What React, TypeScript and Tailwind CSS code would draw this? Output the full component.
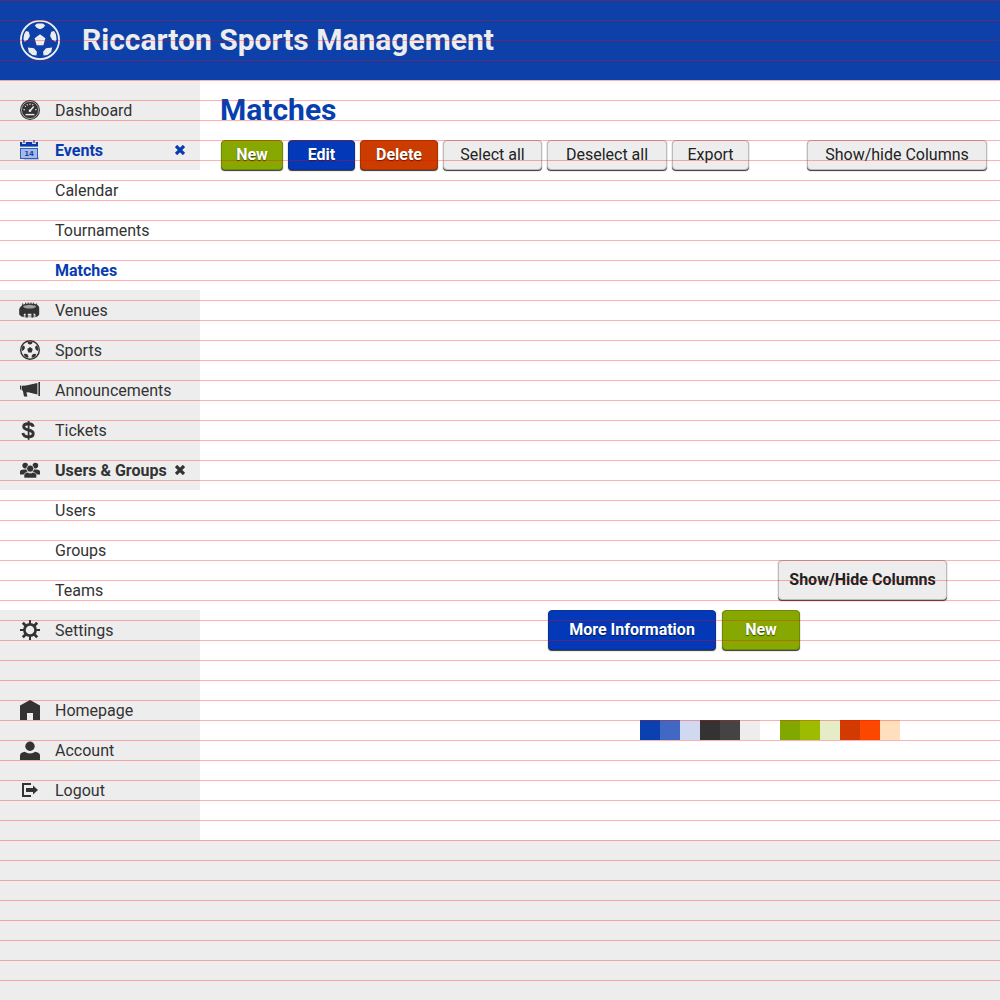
import React from "react";

type IconProps = { className?: string };

function BallIcon({ className = "", ring = 1.8 }: IconProps & { ring?: number }) {
  return (
    <svg viewBox="0 0 40 40" className={className} fill="currentColor" aria-hidden="true">
      <circle cx="20" cy="20" r={20 - ring / 2} fill="none" stroke="currentColor" strokeWidth={ring} />
      <path d="M20 14.2 25.4 18.2 23.4 25.2H16.6L14.6 18.2Z" />
      <path d="M14.8 5.2 17.3 3.6H22.7L25.2 5.2 23.4 7.8 20 9.2 16.6 7.8Z" />
      <path d="M6 11 8.8 11.8 9.9 16 8 19.4 4.6 21.8 3.4 19 4.2 14Z" />
      <path d="M34 11 31.2 11.8 30.1 16 32 19.4 35.4 21.8 36.6 19 35.8 14Z" />
      <path d="M7.8 27.6 14 28.2 16.9 31.8 16.4 35.6 12.4 35 8.8 32Z" />
      <path d="M32.2 27.6 26 28.2 23.1 31.8 23.6 35.6 27.6 35 31.2 32Z" />
    </svg>
  );
}

function GaugeIcon({ className }: IconProps) {
  return (
    <svg viewBox="0 0 20 20" className={className} aria-hidden="true">
      <circle cx="10" cy="10" r="10" fill="currentColor" />
      <circle cx="10" cy="10" r="8.6" fill="none" stroke="#ededed" strokeWidth="0.6" />
      <g stroke="#ededed" strokeWidth="1" fill="none">
        <path d="M10 3.4V5M7 4 7.5 5.4M4.8 5.8 6 6.8M3.4 9.6 5 9.8M16.6 9.6 15 9.8M13 4 12.5 5.4" />
        <path d="M10 10.8 13.8 6.6" strokeWidth="1.5" />
        <circle cx="10" cy="10.8" r="1.3" fill="#ededed" stroke="none" />
        <path d="M5.6 14.6H14.4" strokeWidth="1.4" />
      </g>
    </svg>
  );
}

function CalendarIcon({ className }: IconProps) {
  return (
    <svg viewBox="0 0 20 20" className={className} aria-hidden="true">
      <path d="M0 2H18V6.6H0Z" fill="#083bb0" />
      <path d="M2.2 0H5.8V4H2.2ZM12.2 0H15.8V4H12.2Z" fill="#ededed" />
      <path d="M3.4 0H4.6V3H3.4ZM13.4 0H14.6V3H13.4Z" fill="#083bb0" />
      <path d="M2 17H17V9H18V16L19 19.5H4Z" fill="#7f9bd8" />
      <rect x="0.5" y="8.5" width="17" height="10" fill="#a8bae4" stroke="#2e5bbd" />
      <text x="9" y="16.2" textAnchor="middle" fontSize="7" fontWeight="700" fill="#1546b0" className="font-['DejaVu_Sans',sans-serif]">
        14
      </text>
    </svg>
  );
}

function StadiumIcon({ className }: IconProps) {
  return (
    <svg viewBox="0 0 20 20" className={className} fill="currentColor" aria-hidden="true">
      <path d="M3.6 15H15.4V17.4H3.6Z" fill="#b5b5b5" />
      <path d="M0 7.6 1.6 5.8 3.4 4.6 6 3.8 10 3.5 14 3.8 16.6 4.6 18.4 5.8 19.2 7.6V14.6L17.6 16.6 15.4 17V14L13.6 13.4V17.6H11.4V13.8H7.8V17.6H5.6V13.4L3.8 14V17L1.4 16.6-.8 14.6V9Z" />
      <ellipse cx="9.6" cy="6.6" rx="6.4" ry="1.9" fill="#a0a0a0" />
      <path d="M2.6 3.4V6M5.6 2.6V5.6M8.2 2.4V5M11 2.4V5M13.6 2.6V5.6M16.6 3.4V6" stroke="currentColor" strokeWidth="0.9" />
    </svg>
  );
}

function MegaphoneIcon({ className }: IconProps) {
  return (
    <svg viewBox="0 0 20 20" className={className} fill="currentColor" aria-hidden="true">
      <path d="M0 5.6H1.2V9.6H0ZM1.8 5.8 6 5.4 17.4 3V14.4L8.2 12.2 6.4 12.6 7.4 16.6H4L2.8 10.4H1.8ZM18.4 2H20V16H18.4Z" />
    </svg>
  );
}

function DollarIcon({ className }: IconProps) {
  return (
    <svg viewBox="0 0 20 20" className={className} fill="none" stroke="currentColor" aria-hidden="true">
      <path d="M13.2 6.8C12.8 4.8 11 3.8 8.4 3.8 5.6 3.8 3.7 5 3.7 6.8 3.7 11 13.2 9 13.2 13.4 13.2 15.6 11.2 16.8 8.4 16.8 5.2 16.8 3.4 15.6 2.9 13" strokeWidth="2.9" />
      <path d="M8.6 1V19.8" strokeWidth="1.8" />
    </svg>
  );
}

function GroupIcon({ className }: IconProps) {
  return (
    <svg viewBox="0 0 20 20" className={className} fill="currentColor" aria-hidden="true">
      <circle cx="5.2" cy="5.6" r="2.8" />
      <circle cx="15.4" cy="5.6" r="2.8" />
      <path d="M0 14.4V11.8C0 10.2 1.6 9.4 4 9.4H6.6L8 11 4 14.4ZM20 14.4V11.8C20 10.2 18.4 9.4 16 9.4H13.4L12 11 16 14.4Z" />
      <circle cx="10.2" cy="8.6" r="3.6" stroke="#ededed" strokeWidth="0.8" />
      <path d="M4 18V15.2C4 13.4 5.6 12.4 7.6 12.2 9 13.4 11.4 13.4 12.8 12.2 15 12.4 16.6 13.4 16.6 15.2V18Z" stroke="#ededed" strokeWidth="0.6" />
    </svg>
  );
}

function GearIcon({ className }: IconProps) {
  return (
    <svg viewBox="0 0 20 20" className={className} fill="none" stroke="currentColor" aria-hidden="true">
      <circle cx="10" cy="10" r="5.6" strokeWidth="2.7" />
      <path d="M10 0V4M10 16V20M0 10H4M16 10H20" strokeWidth="2" />
      <path d="M2.8 2.8 5.8 5.8M14.2 14.2 17.2 17.2M17.2 2.8 14.2 5.8M5.8 14.2 2.8 17.2" strokeWidth="2.7" />
    </svg>
  );
}

function HomeIcon({ className }: IconProps) {
  return (
    <svg viewBox="0 0 20 20" className={className} fill="currentColor" aria-hidden="true">
      <path d="M0 20V5.6L10 0 20 5.6V20H13V13H7V20Z" />
    </svg>
  );
}

function PersonIcon({ className }: IconProps) {
  return (
    <svg viewBox="0 0 20 20" className={className} fill="currentColor" aria-hidden="true">
      <circle cx="10" cy="6.3" r="4.7" />
      <path d="M0 20V15.4C0 13.4 2 12.2 5 11.8 7.6 14 12.4 14 15 11.8 18 12.2 20 13.4 20 15.4V20Z" />
    </svg>
  );
}

function LogoutIcon({ className }: IconProps) {
  return (
    <svg viewBox="0 0 20 20" className={className} fill="currentColor" aria-hidden="true">
      <path d="M11 3H2V17H11V15H4V5H11ZM6 8H13V5.6L18 10 13 14.4V12H6Z" />
    </svg>
  );
}

function CrossIcon({ className }: IconProps) {
  return (
    <svg viewBox="0 0 10 10" className={className} stroke="currentColor" strokeWidth="3.3" aria-hidden="true">
      <path d="M1 1 9 9M9 1 1 9" />
    </svg>
  );
}

type Item = {
  label: string;
  icon: (p: IconProps) => React.ReactElement;
  open?: boolean;
  active?: boolean;
  children?: string[];
};

const SmallBall = (p: IconProps) => <BallIcon {...p} ring={2.8} />;

const mainItems: Item[] = [
  { label: "Dashboard", icon: GaugeIcon },
  { label: "Events", icon: CalendarIcon, open: true, active: true, children: ["Calendar", "Tournaments", "Matches"] },
  { label: "Venues", icon: StadiumIcon },
  { label: "Sports", icon: SmallBall },
  { label: "Announcements", icon: MegaphoneIcon },
  { label: "Tickets", icon: DollarIcon },
  { label: "Users & Groups", icon: GroupIcon, open: true, children: ["Users", "Groups", "Teams"] },
  { label: "Settings", icon: GearIcon },
];

const accountItems: Item[] = [
  { label: "Homepage", icon: HomeIcon },
  { label: "Account", icon: PersonIcon },
  { label: "Logout", icon: LogoutIcon },
];

function NavItem({ item }: { item: Item }) {
  const Icon = item.icon;
  const tone = item.active ? "text-[#083bb0]" : "text-[#333]";
  return (
    <li>
      <div className={`flex h-10 items-center pr-[15px] pl-5 ${tone} ${item.open ? "font-bold" : ""}`}>
        <a href="#" className="flex flex-1 items-center gap-[15px] whitespace-nowrap">
          <Icon className="size-5 shrink-0 overflow-visible" />
          <span className="pt-0.5">{item.label}</span>
        </a>
        {item.open && (
          <button type="button" aria-label={`Close ${item.label}`}>
            <CrossIcon className="size-2.5" />
          </button>
        )}
      </div>
      {item.children && (
        <ul className="bg-white">
          {item.children.map((child) => (
            <li key={child}>
              <a
                href="#"
                className={`flex h-10 items-center pt-0.5 pl-[55px] ${child === "Matches" ? "font-bold text-[#083bb0]" : "text-[#333]"}`}
              >
                {child}
              </a>
            </li>
          ))}
        </ul>
      )}
    </li>
  );
}

const tones = {
  green: "bg-[#87a800] border-[#6f8a00] text-white font-bold text-shadow-[0_1px_1px_rgb(0_0_0/0.6)]",
  blue: "bg-[#0339b8] border-[#0a338f] text-white font-bold text-shadow-[0_1px_1px_rgb(0_0_0/0.6)]",
  red: "bg-[#cb3c00] border-[#a83200] text-white font-bold text-shadow-[0_1px_1px_rgb(0_0_0/0.6)]",
  grey: "bg-[#ededed] border-[#bbb] text-[#222]",
};

function Button({ tone, className, children }: { tone: keyof typeof tones; className: string; children: string }) {
  return (
    <button
      type="button"
      className={`rounded border whitespace-nowrap shadow-[0_1px_1px_#333] ${tones[tone]} ${className}`}
    >
      {children}
    </button>
  );
}

const swatches = [
  "bg-[#0a40b0]",
  "bg-[#4169c3]",
  "bg-[#d0d9f0]",
  "bg-[#333333]",
  "bg-[#444444]",
  "bg-[#ededed]",
  "bg-white",
  "bg-[#80a800]",
  "bg-[#9bbc00]",
  "bg-[#e5edc8]",
  "bg-[#d13a00]",
  "bg-[#fb4700]",
  "bg-[#ffdfbd]",
];

export default function App() {
  return (
    <div className="relative min-h-screen bg-[#ededed] font-[Roboto,sans-serif] text-base leading-5">
      <header className="flex h-20 items-center gap-[22px] bg-[#0d41a9] px-5 text-[#ededed]">
        <BallIcon className="size-10" />
        <span className="text-[30px] leading-10 font-bold">Riccarton Sports Management</span>
      </header>

      <div className="flex">
        <nav className="w-[200px] shrink-0 pt-[10px] pb-[30px]">
          <ul>
            {mainItems.map((item) => (
              <NavItem key={item.label} item={item} />
            ))}
          </ul>
          <ul className="pt-10">
            {accountItems.map((item) => (
              <NavItem key={item.label} item={item} />
            ))}
          </ul>
        </nav>

        <main className="flex min-w-0 flex-1 flex-col bg-white pt-[10px] pr-[13px] pl-5">
          <h1 className="text-[30px] leading-10 font-bold text-[#083fae]">Matches</h1>
          <div className="mt-[10px] flex gap-[5px] pl-px">
            <Button tone="green" className="h-[30px] w-[62px]">New</Button>
            <Button tone="blue" className="h-[30px] w-[67px]">Edit</Button>
            <Button tone="red" className="h-[30px] w-[78px]">Delete</Button>
            <Button tone="grey" className="h-[30px] w-[99px]">Select all</Button>
            <Button tone="grey" className="h-[30px] w-[120px]">Deselect all</Button>
            <Button tone="grey" className="h-[30px] w-[77px]">Export</Button>
            <Button tone="grey" className="ml-auto h-[30px] w-[180px]">Show/hide Columns</Button>
          </div>

          <div className="mt-auto flex justify-end pr-10">
            <Button tone="grey" className="h-10 w-[169px] font-bold">Show/Hide Columns</Button>
          </div>
          <div className="mt-[10px] flex justify-end gap-[6px] pr-[187px]">
            <Button tone="blue" className="h-10 w-[168px]">More Information</Button>
            <Button tone="green" className="h-10 w-[78px]">New</Button>
          </div>
          <div className="mt-[70px] mb-[100px] flex justify-end pr-[87px]">
            {swatches.map((color) => (
              <span key={color} className={`size-5 ${color}`} />
            ))}
          </div>
        </main>
      </div>

      <div className="pointer-events-none absolute inset-0 bg-[linear-gradient(to_bottom,rgb(255_0_0/0.31)_1px,transparent_1px)] bg-[length:100%_20px]" />
    </div>
  );
}
